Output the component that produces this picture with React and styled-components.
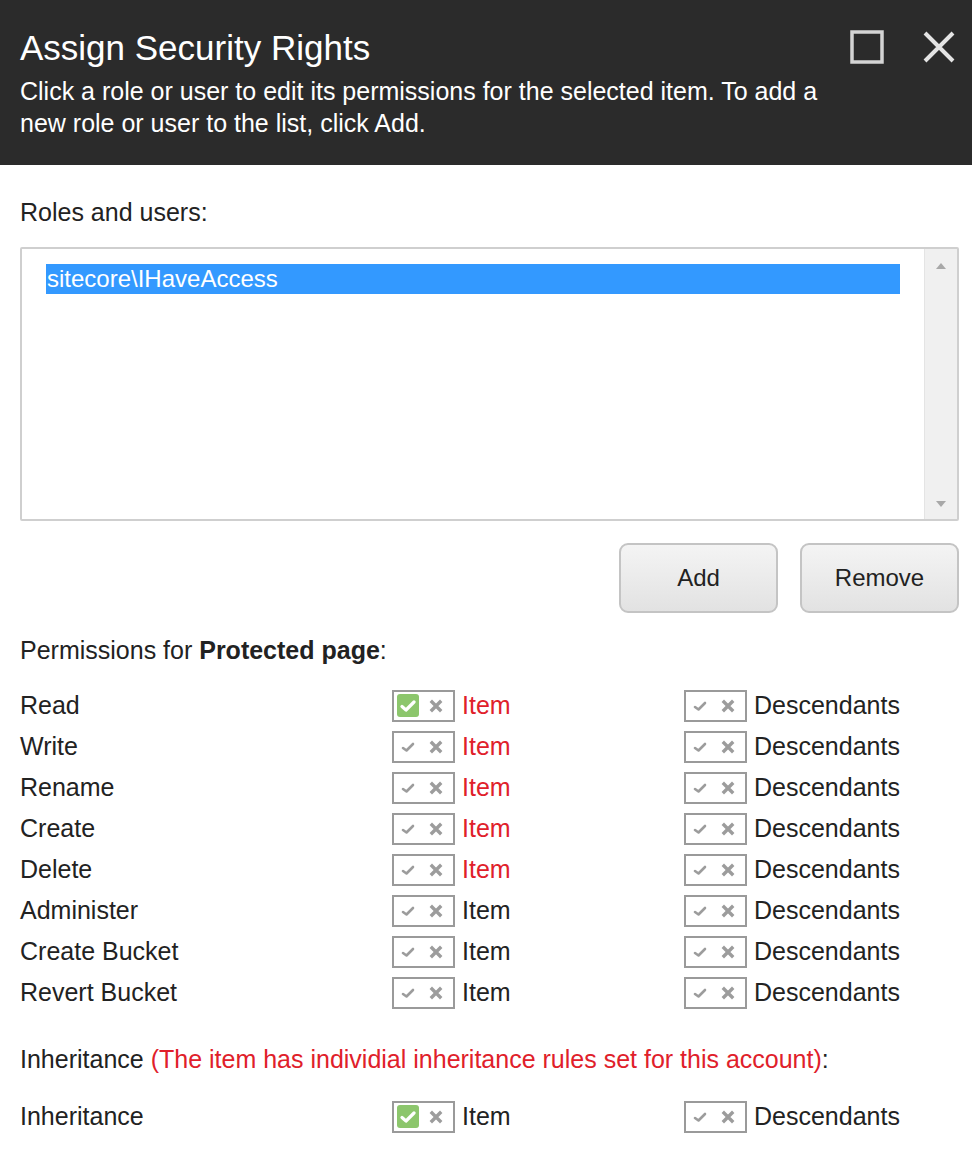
import React from "react";
import styled, { createGlobalStyle } from "styled-components";

const GlobalStyle = createGlobalStyle`
  body {
    margin: 0;
    background: #ffffff;
    font-family: "Liberation Sans", Arial, sans-serif;
    color: #222;
  }
`;

const Dialog = styled.div`
  width: 972px;
  min-height: 1164px;
  background: #fff;
`;

const Header = styled.div`
  display: flex;
  justify-content: space-between;
  height: 165px;
  box-sizing: border-box;
  padding: 28px 16px 0 20px;
  background: #2b2b2b;
  color: #fff;
`;

const Title = styled.h1`
  margin: 0 0 7px;
  font-size: 35px;
  font-weight: normal;
  line-height: 40px;
`;

const Subtitle = styled.p`
  margin: 0;
  font-size: 25px;
  line-height: 32px;
  max-width: 815px;
`;

const HeaderTools = styled.div`
  display: flex;
  gap: 38px;
  padding-top: 2px;
`;

const Body = styled.div`
  padding: 0 13px 0 20px;
`;

const Label = styled.div`
  font-size: 25px;
  line-height: 30px;
  margin: ${(p) => p.$margin || "0"};
`;

const Strong = styled.b`
  font-weight: bold;
`;

const Warning = styled.span`
  color: #e0202a;
`;

const ListBox = styled.div`
  display: flex;
  height: 274px;
  box-sizing: border-box;
  border: 2px solid #cfcfcf;
  border-radius: 2px;
`;

const ListItems = styled.div`
  flex: 1;
  padding: 15px 24px 0 24px;
`;

const ListItem = styled.div`
  height: 30px;
  line-height: 30px;
  padding-left: 1px;
  font-size: 24px;
  background: ${(p) => (p.$selected ? "#3399ff" : "transparent")};
  color: ${(p) => (p.$selected ? "#fff" : "#222")};
`;

const Scrollbar = styled.div`
  width: 32px;
  background: #f0f0f0;
  border-left: 1px solid #e4e4e4;
  display: flex;
  flex-direction: column;
  justify-content: space-between;
  align-items: center;
  padding: 14px 0 12px;
`;

const Arrow = styled.div`
  width: 0;
  height: 0;
  border-left: 5px solid transparent;
  border-right: 5px solid transparent;
  ${(p) =>
    p.$down
      ? "border-top: 6px solid #a8a8a8;"
      : "border-bottom: 6px solid #a8a8a8;"}
`;

const ButtonRow = styled.div`
  display: flex;
  justify-content: flex-end;
  gap: 22px;
  margin: 22px 0 0;
`;

const Button = styled.button`
  width: 159px;
  height: 70px;
  border: 2px solid #c4c4c4;
  border-radius: 9px;
  background: linear-gradient(#f4f4f4, #e2e2e2);
  font-family: "Liberation Sans", Arial, sans-serif;
  font-size: 24px;
  color: #222;
`;

const PermGrid = styled.div`
  display: grid;
  grid-template-columns: 372px 292px 1fr;
  grid-auto-rows: 41px;
  align-items: center;
`;

const PermName = styled.div`
  font-size: 25px;
`;

const Cell = styled.div`
  display: flex;
  align-items: center;
  gap: 7px;
  font-size: 25px;
  color: ${(p) => (p.$red ? "#e0202a" : "#222")};
`;

const Toggle = styled.div`
  display: flex;
  align-items: center;
  width: 63px;
  height: 32px;
  box-sizing: border-box;
  border: 2px solid #9a9a9a;
  padding: 0 0 0 3px;
  gap: 6px;
`;

const Allow = styled.div`
  width: 22px;
  height: 23px;
  border-radius: 3px;
  display: flex;
  align-items: center;
  justify-content: center;
  background: ${(p) => (p.$on ? "#8cc66c" : "transparent")};
`;

const Deny = styled.div`
  width: 22px;
  height: 23px;
  display: flex;
  align-items: center;
  justify-content: center;
`;

const CheckIcon = ({ on }) => (
  <svg width="16" height="14" viewBox="0 0 16 14">
    <path
      d={on ? "M2 7.5 L6 11 L14 3" : "M3 8 L6.5 10.5 L13 4"}
      fill="none"
      stroke={on ? "#fff" : "#9c9c9c"}
      strokeWidth={on ? 3.2 : 2.6}
      strokeLinecap="round"
      strokeLinejoin="round"
    />
  </svg>
);

const CrossIcon = () => (
  <svg width="14" height="14" viewBox="0 0 14 14">
    <path
      d="M3 3 L11 11 M11 3 L3 11"
      stroke="#9c9c9c"
      strokeWidth="3.4"
      strokeLinecap="square"
    />
  </svg>
);

const ToggleBox = ({ on }) => (
  <Toggle>
    <Allow $on={on}>
      <CheckIcon on={on} />
    </Allow>
    <Deny>
      <CrossIcon />
    </Deny>
  </Toggle>
);

const permissions = [
  { name: "Read", itemOn: true, red: true },
  { name: "Write", red: true },
  { name: "Rename", red: true },
  { name: "Create", red: true },
  { name: "Delete", red: true },
  { name: "Administer" },
  { name: "Create Bucket" },
  { name: "Revert Bucket" },
];

const PermRow = ({ name, itemOn, red }) => (
  <>
    <PermName>{name}</PermName>
    <Cell $red={red}>
      <ToggleBox on={itemOn} />
      Item
    </Cell>
    <Cell>
      <ToggleBox />
      Descendants
    </Cell>
  </>
);

export default function App() {
  return (
    <Dialog>
      <GlobalStyle />
      <Header>
        <div>
          <Title>Assign Security Rights</Title>
          <Subtitle>
            Click a role or user to edit its permissions for the selected item.
            To add a new role or user to the list, click Add.
          </Subtitle>
        </div>
        <HeaderTools>
          <svg width="34" height="34" viewBox="0 0 34 34">
            <rect x="2" y="2" width="30" height="30" fill="none" stroke="#d4d4d4" strokeWidth="3.5" />
          </svg>
          <svg width="34" height="34" viewBox="0 0 34 34">
            <path d="M3 3 L31 31 M31 3 L3 31" stroke="#e4e4e4" strokeWidth="4" />
          </svg>
        </HeaderTools>
      </Header>
      <Body>
        <Label $margin="32px 0 20px">Roles and users:</Label>
        <ListBox>
          <ListItems>
            <ListItem $selected>sitecore\IHaveAccess</ListItem>
          </ListItems>
          <Scrollbar>
            <Arrow />
            <Arrow $down />
          </Scrollbar>
        </ListBox>
        <ButtonRow>
          <Button>Add</Button>
          <Button>Remove</Button>
        </ButtonRow>
        <Label $margin="22px 0 20px">
          Permissions for <Strong>Protected page</Strong>:
        </Label>
        <PermGrid>
          {permissions.map((p) => (
            <PermRow key={p.name} {...p} />
          ))}
        </PermGrid>
        <Label $margin="31px 0 22px">
          Inheritance{" "}
          <Warning>(The item has individial inheritance rules set for this account)</Warning>:
        </Label>
        <PermGrid>
          <PermRow name="Inheritance" itemOn />
        </PermGrid>
      </Body>
    </Dialog>
  );
}
